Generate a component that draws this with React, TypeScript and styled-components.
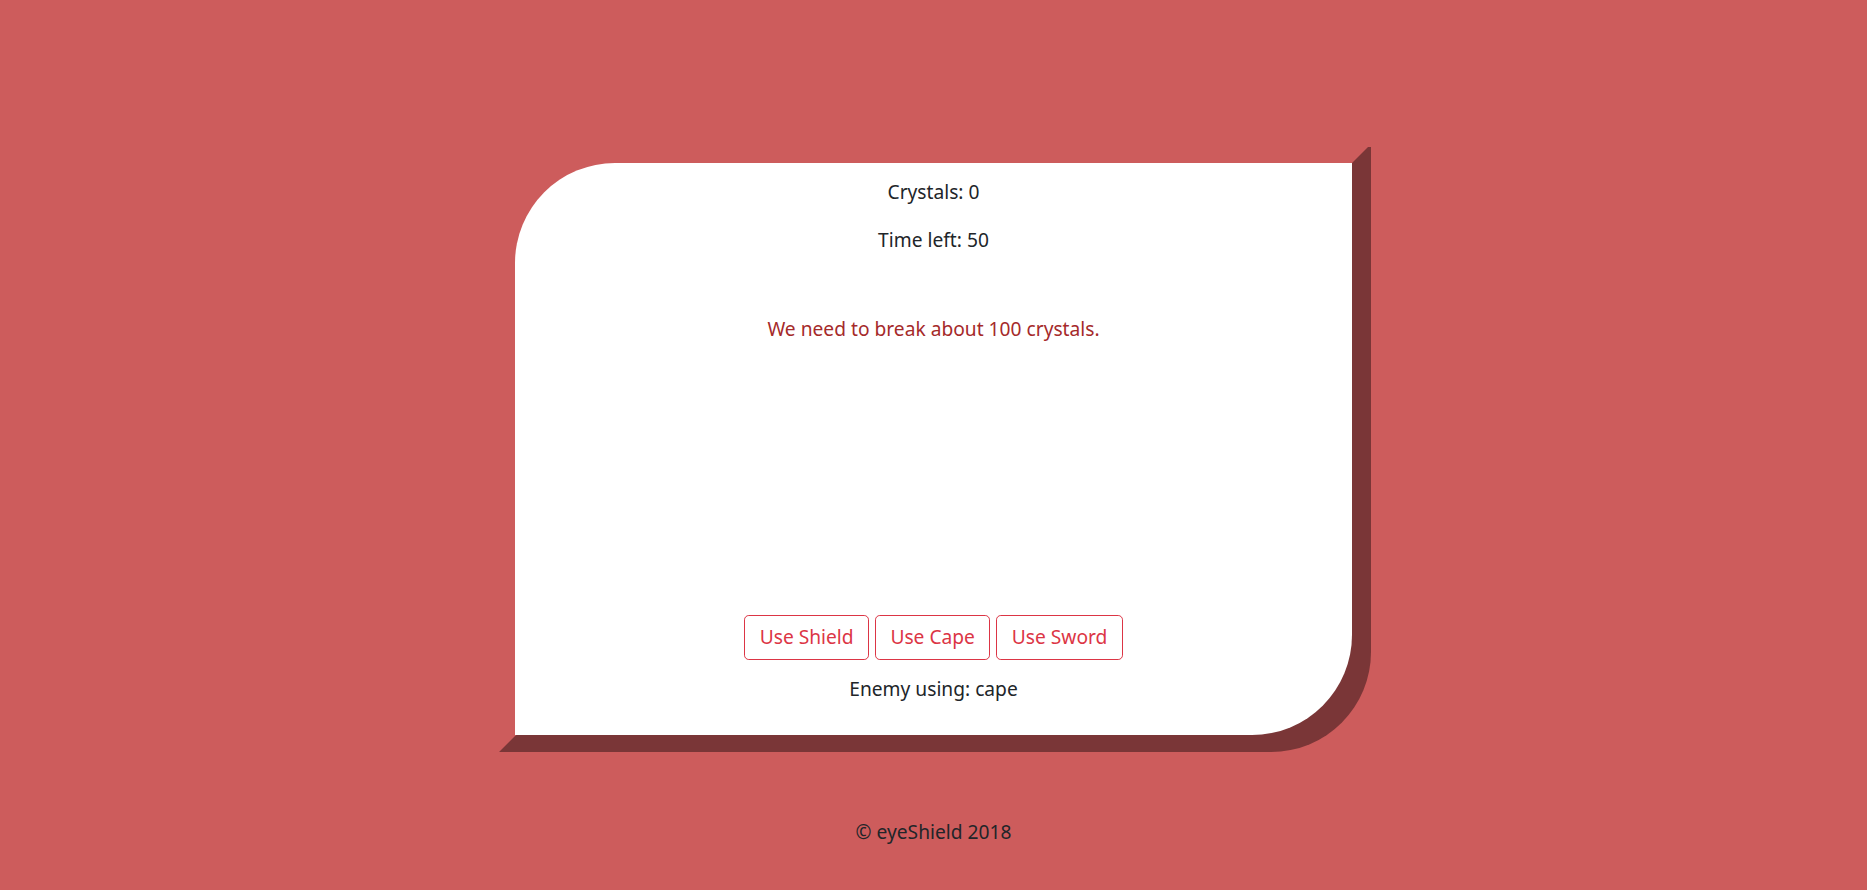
import React from 'react';
import styled, {createGlobalStyle} from 'styled-components';

const GlobalStyle = createGlobalStyle`
    html, body {
        margin: 0;
        padding: 0;
    }
    body {
        background-color: #cd5c5c;
        color: #212529;
        font-family: 'Segoe UI', 'Noto Sans', 'Open Sans', sans-serif;
        font-size: 19.2px;
        line-height: 28.8px;
    }
`;

const Page = styled.main`
    min-height: 890px;
    box-sizing: border-box;
    padding-top: 163px;
    display: flex;
    flex-direction: column;
    align-items: center;
`;

// holds the card and paints the dark 3d edge behind it
const CardFrame = styled.div`
    position: relative;
    z-index: 0;

    &::before {
        content: '';
        position: absolute;
        z-index: -1;
        left: -16px;
        top: -16px;
        right: -19px;
        bottom: -17px;
        background-color: #7a3637;
        border-radius: 4px 0 100px 0;
        clip-path: polygon(869px 0, 100% 0, 100% 100%, 0 100%, 16px 589px, 853px 16px);
    }
`;

const Card = styled.section`
    width: 837px;
    height: 572px;
    box-sizing: border-box;
    padding: 15px 0 12px 0;
    background-color: #fff;
    border-radius: 100px 0 100px 0;
    display: flex;
    flex-direction: column;
    align-items: center;
`;

const Line = styled.p<{$tone?: 'warn'}>`
    margin: 0 0 19.2px 0;
    text-align: center;
    color: ${(props) => (props.$tone === 'warn' ? '#a52a2a' : '#212529')};
`;

const Message = styled(Line)`
    margin-top: 41px;
`;

const Actions = styled.div`
    margin-top: auto;
    margin-bottom: 15px;
    display: flex;
    gap: 6px;
`;

const ActionButton = styled.button`
    font-family: inherit;
    font-size: 19.2px;
    line-height: 28.8px;
    padding: 7.2px 14.4px;
    color: #dc3545;
    background: transparent;
    border: 1.2px solid #dc3545;
    border-radius: 4.8px;
    cursor: pointer;
`;

const Footer = styled.footer`
    margin-top: 83px;
    text-align: center;
`;

export default function App(): JSX.Element {
    const crystals = 0;
    const timeLeft = 50;
    const enemyItem = 'cape';

    return (
        <>
            <GlobalStyle />
            <Page>
                <CardFrame>
                    <Card>
                        <Line>Crystals: {crystals}</Line>
                        <Line>Time left: {timeLeft}</Line>
                        <Message $tone="warn">We need to break about 100 crystals.</Message>
                        <Actions>
                            <ActionButton>Use Shield</ActionButton>
                            <ActionButton>Use Cape</ActionButton>
                            <ActionButton>Use Sword</ActionButton>
                        </Actions>
                        <Line>Enemy using: {enemyItem}</Line>
                    </Card>
                </CardFrame>
                <Footer>© eyeShield 2018</Footer>
            </Page>
        </>
    );
}
